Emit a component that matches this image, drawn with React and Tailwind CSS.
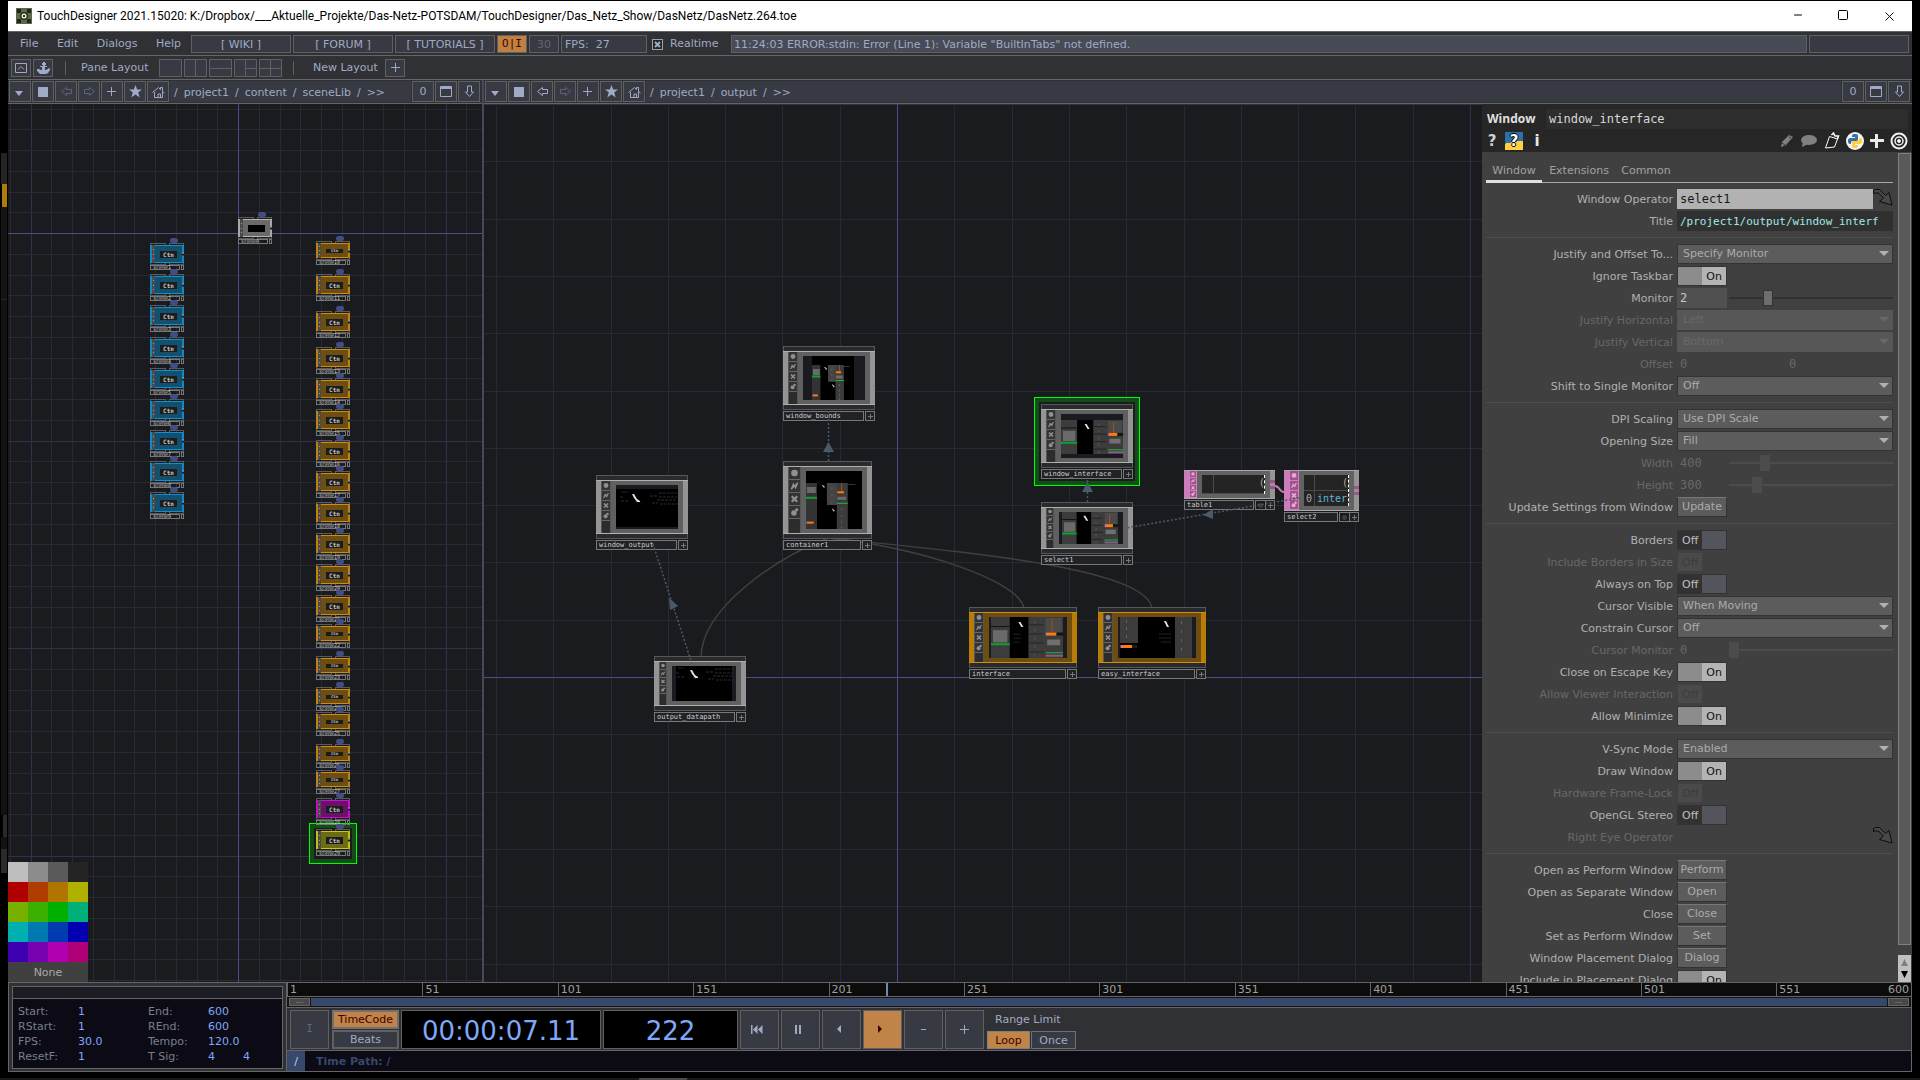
import React, { useState } from 'react';
import { Minus, Square, X } from 'lucide-react';

const swatches = [
  'bg-[#bebebe]', 'bg-[#8c8c8c]', 'bg-[#5a5a5a]', 'bg-[#242424]',
  'bg-[#b00000]', 'bg-[#b03c00]', 'bg-[#b07400]', 'bg-[#b0b000]',
  'bg-[#78b000]', 'bg-[#3cb000]', 'bg-[#00b000]', 'bg-[#00b078]',
  'bg-[#00b0b0]', 'bg-[#0078b0]', 'bg-[#003cb0]', 'bg-[#0000b0]',
  'bg-[#3c00b0]', 'bg-[#7800b0]', 'bg-[#b000b0]', 'bg-[#b00078]',
];

const sceneColors = {
  gray: { edge: 'bg-[#a8a8a8]', fill: 'bg-[#6a6a6a] border-[#b5b5b5]' },
  blue: { edge: 'bg-[#1188c8]', fill: 'bg-[#12506e] border-[#1090d0]' },
  orange: { edge: 'bg-[#c0820c]', fill: 'bg-[#6e4d10] border-[#d08c10]' },
  magenta: { edge: 'bg-[#c010c0]', fill: 'bg-[#6c106c] border-[#c814c8]' },
  yellow: { edge: 'bg-[#c0c010]', fill: 'bg-[#6c6c10] border-[#c8c814]' },
};

// x, y are canvas coordinates of the node frame
const scenes = [
  { n: 0, x: 230, y: 113, h: 18, c: 'gray' },
  ...[139, 170, 201, 233, 264, 295, 326, 357, 388].map((y, i) => ({ n: i + 1, x: 142, y, h: 18, c: 'blue' })),
  { n: 10, x: 308, y: 137, h: 15, c: 'orange' },
  ...[170, 207, 243, 274, 305, 336, 367, 398, 429, 460, 491].map((y, i) => ({ n: i + 11, x: 308, y, h: 18, c: 'orange' })),
  ...[520, 552, 583, 608, 640, 666].map((y, i) => ({ n: i + 22, x: 308, y, h: 15, c: 'orange' })),
  { n: 28, x: 308, y: 694, h: 18, c: 'magenta' },
  { n: 29, x: 308, y: 725, h: 18, c: 'yellow' },
];

const nodes = [
  { name: 'window_bounds', x: 299, y: 242, w: 92, h: 54, icons: 10, view: 'bounds' },
  { name: 'container1', x: 299, y: 357, w: 89, h: 68, icons: 13, view: 'container' },
  { name: 'window_output', x: 112, y: 371, w: 92, h: 54, icons: 10, view: 'output' },
  { name: 'output_datapath', x: 170, y: 552, w: 92, h: 45, icons: 8, view: 'datapath' },
  { name: 'window_interface', x: 557, y: 300, w: 92, h: 54, icons: 10, view: 'window' },
  { name: 'select1', x: 557, y: 398, w: 92, h: 42, icons: 8, view: 'select' },
  { name: 'interface', x: 485, y: 503, w: 108, h: 51, icons: 10, view: 'interface', orange: true },
  { name: 'easy_interface', x: 614, y: 503, w: 108, h: 51, icons: 10, view: 'easy', orange: true },
];

function Grid({ ox, oy, step }) {
  const lines = [];
  for (let i = -40; i <= 40; i++) {
    const x = Math.round(ox + i * step);
    const y = Math.round(oy + i * step);
    const color = i % 10 === 0 ? '#31314e' : '#292a31';
    if (x >= 0) lines.push(<rect key={'v' + i} x={x} y="0" width="1" height="100%" fill={color} />);
    if (y >= 0) lines.push(<rect key={'h' + i} x="0" y={y} width="100%" height="1" fill={color} />);
  }
  return (
    <svg className="absolute inset-0 h-full w-full" aria-hidden="true">
      {lines}
      <rect x={ox} y="0" width="1" height="100%" fill="#4c4c86" />
      <rect x="0" y={oy} width="100%" height="1" fill="#4c4c86" />
    </svg>
  );
}

function SceneNode({ n, x, y, h, c }) {
  const color = sceneColors[c];
  return (
    <div className="absolute w-[34px]" style={{ left: x, top: y }}>
      <div className="absolute -top-[5px] left-[20px] h-[5px] w-[8px] rounded-full bg-[#414d86]"></div>
      <div className="flex h-[2px] justify-between">
        <div className="w-4 border border-b-0 border-[#5a5a5a]"></div>
        <div className="w-[15px] border border-b-0 border-[#5a5a5a]"></div>
      </div>
      <div className="relative flex" style={{ height: h }}>
        <div className={`w-[2px] ${color.edge}`}></div>
        <div className="flex w-[3px] flex-col items-center justify-evenly bg-[#4b4b4b]">
          <span className="h-px w-px bg-[#999]"></span>
          <span className="h-px w-px bg-[#999]"></span>
          <span className="h-px w-px bg-[#999]"></span>
        </div>
        <div className={`flex flex-1 items-center justify-center border-y ${color.fill}`}>
          <div className={`flex w-[17px] items-center justify-center overflow-hidden font-['DejaVu_Sans_Mono',monospace] font-bold text-[#c8c8c8] ${c === 'gray' ? 'h-[7px] bg-black' : h > 15 ? 'h-[7px] bg-[#1c1c1c] text-[6px] leading-[7px]' : 'h-[4px] bg-[#1c1c1c] text-[4px] leading-[4px]'}`}>
            {c !== 'gray' && 'Ctn'}
          </div>
        </div>
        <div className={`w-[2px] ${color.edge}`}></div>
        <div className="absolute right-0 top-1/2 h-[3px] w-[2px] -translate-y-1/2 border-t border-[#ccc] bg-[#15161a]"></div>
      </div>
      <div className="flex h-[2px] justify-between">
        <div className="w-4 border border-t-0 border-[#5a5a5a]"></div>
        <div className="w-[15px] border border-t-0 border-[#5a5a5a]"></div>
      </div>
      <div className="flex h-[5px] justify-between">
        <div className="flex w-[30px] items-center border border-[#777] pl-[2px] font-['DejaVu_Sans_Mono',monospace] text-[5px] leading-[3px] text-[#d0d0d0]">scene{n}</div>
        <div className="w-[3px] border border-[#777]"></div>
      </div>
    </div>
  );
}

function FlagIcons({ width, pink }) {
  const box = pink ? 'bg-[#a0528c] border-[#d080bc]' : 'bg-[#333] border-[#666]';
  const ink = pink ? '#e6a8d8' : '#909090';
  return (
    <div className={`flex flex-col border-x ${pink ? 'bg-[#a0528c] border-[#d080bc]' : 'bg-[#2c2c2c] border-[#555]'}`} style={{ width }}>
      {[
        <circle key="a" cx="5" cy="5" r="3" fill={ink} />,
        <path key="b" d="M2 8 L4 3 L5 5 L8 2 L6 7 L5 5 Z" fill={ink} stroke={ink} />,
        <path key="c" d="M2.500 2.500 L7.500 7.500 M7.500 2.500 L2.500 7.500" stroke={ink} strokeWidth="2" />,
        <g key="d" fill={ink}><circle cx="4.500" cy="6" r="2.500" /><circle cx="7" cy="3" r="1.500" /></g>,
      ].map((shape, i) => (
        <div key={i} className={`border-b ${box}`} style={{ height: pink ? '25%' : width }}>
          <svg viewBox="0 0 10 10" className="h-full w-full">{shape}</svg>
        </div>
      ))}
    </div>
  );
}

function Streak({ x, y }) {
  return <path d={`M${x} ${y} l2 0 l3 5 l3 2 l0 1 l-3 0 l-3 -4 z`} fill="#e0e0e0" />;
}

function Panels({ x, w, h, full }) {
  return (
    <g>
      <rect x={x} y="0" width={w} height={h} fill="#000" />
      <rect x={x} y="0" width={w * 0.26} height={h} fill="#3c3c3c" />
      <rect x={x} y={h * 0.22} width={w * 0.26} height="1" fill="#151515" />
      <rect x={x + 2} y={h * 0.32} width={w * 0.2} height={h * 0.3} fill="#6a6a6a" />
      <rect x={x} y={h * 0.64} width={w * 0.26} height="2" fill="#12a030" />
      <rect x={x + w * 0.52} y="0" width={w * 0.48} height={h} fill="#3c3c3c" />
      <rect x={x + w * 0.76} y="1" width={w * 0.22} height={h * 0.35} fill="#4a4a4a" />
      <rect x={x + w * 0.84} y="2" width="1" height={h * 0.32} fill="#a0501c" />
      {[0.18, 0.4, 0.62, 0.84].map((t) => <rect key={t} x={x + w * 0.53} y={h * t} width={w * 0.2} height="1" fill="#252525" />)}
      {[0.1, 0.3, 0.5, 0.7, 0.92].map((t) => <rect key={t} x={x + w * 0.6} y={h * t} width="1" height="2" fill="#5a5a5a" />)}
      <rect x={x + w * 0.76} y={h * 0.38} width={w * 0.15} height="3" fill="#ff7810" />
      <rect x={x + w * 0.75} y={h * 0.38} width="1" height="3" fill="#3040ff" />
      <rect x={x + w * 0.91} y={h * 0.38} width={w * 0.09} height="3" fill="#151515" />
      <rect x={x + w * 0.78} y={h * 0.55} width={w * 0.18} height={h * 0.14} fill="#707070" />
      <rect x={x + w * 0.76} y={h * 0.86} width={w * 0.24} height="1" fill="#10c030" />
      <rect x={x + w * 0.76} y={h * 0.92} width={w * 0.24} height="2" fill="#8a5a88" />
      <path d={`M${x + w * 0.38} ${h * 0.12} l2 0 l3 5 l-2 0 z`} fill="#e8e8e8" />
      {full && <path d={`M${x + w * 0.3} ${h * 0.42}h8m-7 4h8m-8 4h6`} stroke="#222" />}
    </g>
  );
}

function Tall({ x, y, w, h }) {
  return (
    <g>
      <rect x={x} y={y} width={w * 0.2} height={h} fill="#333" />
      <rect x={x + 1} y={y + 4} width={w * 0.16} height="6" fill="#6a6a6a" />
      <rect x={x} y={y + h * 0.3} width={w * 0.2} height="2" fill="#12a030" />
      <rect x={x} y={y + h * 0.84} width={w * 0.14} height="2" fill="#ff7810" />
      <rect x={x} y={y + h * 0.84} width="1" height="2" fill="#3040ff" />
      <rect x={x + w * 0.38} y={y} width={w * 0.2} height={h * 0.48} fill="#444" />
      <rect x={x + w * 0.56} y={y} width={w * 0.2} height={h} fill="#3c3c3c" />
      <rect x={x + w * 0.64} y={y} width="1" height={h * 0.2} fill="#a0501c" />
      <rect x={x + w * 0.57} y={y + h * 0.18} width={w * 0.12} height="2" fill="#ff7810" />
      <rect x={x + w * 0.57} y={y + h * 0.3} width={w * 0.16} height="3" fill="#6a6a6a" />
      <rect x={x + w * 0.56} y={y + h * 0.43} width={w * 0.2} height="1" fill="#10c030" />
      {[0.1, 0.25, 0.4].map((t) => <rect key={t} x={x + w * 0.46} y={y + h * t} width="1" height="2" fill="#606060" />)}
      {[0.55, 0.7, 0.82, 0.94].map((t) => <rect key={t} x={x + w * 0.64} y={y + h * t} width="1" height="2" fill="#606060" />)}
      <path d={`M${x + w * 0.29} ${y + 2} l1 0 l2 2 l-1 1 z M${x + w * 0.47} ${y + h * 0.56} l1 0 l2 2 l-1 1 z`} fill="#ccc" />
      <rect x={x + w * 0.76} y={y + 1} width={w * 0.14} height="1" fill="#333" />
    </g>
  );
}

function Readout({ x, y }) {
  return (
    <g stroke="#2a2a2a" strokeDasharray="3 1">
      <path d={`M${x} ${y + 4}h7m2 -3h18m-18 4h18m-20 3h20m-25 3h6m2 1h18`} fill="none" />
      <path d={`M${x - 28} ${y}h6m-8 5h3m-2 4h8m8 1h5`} fill="none" />
    </g>
  );
}

function Preview({ view, w, h }) {
  return (
    <svg width={w} height={h} className="block" aria-hidden="true">
      <rect width={w} height={h} fill="#1a1b20" />
      {view === 'bounds' && <><rect x="9" width="42" height={h} fill="#000" /><Tall x={9} y={9} w={42} h={h - 9} /></>}
      {view === 'container' && <><rect width={w} height={h} fill="#000" /><Tall x={0} y={12} w={w - 1} h={h - 12} /></>}
      {view === 'output' && <><rect y="4" width={w} height={h - 6} fill="#000" /><Readout x={34} y={7} /><Streak x={16} y={9} /></>}
      {view === 'datapath' && <><rect x="4" width={w - 8} height={h} fill="#000" /><Readout x={34} y={2} /><Streak x={18} y={4} /></>}
      {view === 'window' && <svg y="6" height={h - 10}><Panels x={0} w={w} h={h - 10} /></svg>}
      {view === 'select' && <Panels x={3} w={w - 8} h={h} />}
      {view === 'interface' && <Panels x={2} w={w - 6} h={h} full />}
      {view === 'easy' && (
        <>
          <rect x="2" width={w - 6} height={h} fill="#000" />
          <rect x="2" width="18" height="26" fill="#3c3c3c" />
          <rect x="2" y="28" width="12" height="3" fill="#ff7810" />
          <rect x="2" y="28" width="1" height="3" fill="#3040ff" />
          <rect x="14" y="28" width="5" height="3" fill="#1c1c1c" />
          <rect x="57" width="17" height={h} fill="#3c3c3c" />
          {[3, 10, 18].map((y) => <rect key={y} x="8" y={y} width="1" height="3" fill="#606060" />)}
          {[4, 13, 22, 31].map((y) => <rect key={y} x="63" y={y} width="1" height="3" fill="#606060" />)}
          <path d="M46 4 l2 0 l3 6 l-2 0 z" fill="#e8e8e8" />
          <path d="M41 17h12m-12 4h12m-10 4h10" stroke="#222" />
        </>
      )}
    </svg>
  );
}

function PlusBox() {
  return (
    <div className="flex h-[10px] w-[10px] items-center justify-center border border-[#777] bg-[#202226]">
      <svg width="5" height="5"><path d="M0 2h5v1H0zM2 0h1v5H2z" fill="#777" /></svg>
    </div>
  );
}

function CompNode({ name, x, y, w, h, icons, view, orange }) {
  const side = orange ? 'bg-[#b87c08]' : 'bg-[#949494]';
  const fill = orange ? 'bg-[#6e4d10]' : 'bg-[#606060]';
  return (
    <div className="absolute" style={{ left: x, top: y, width: w }}>
      <div className="h-[5px] border border-b-0 border-[#55575a] bg-[#292a2c]"></div>
      <div className={`flex border-y ${orange ? 'border-[#d08c10]' : 'border-[#b0b0b0]'}`} style={{ height: h }}>
        <div className={`w-[5px] ${side}`}></div>
        <FlagIcons width={icons} />
        <div className={`flex flex-1 items-center pl-[5px] ${fill}`}>
          <Preview view={view} w={w - icons - 20} h={h - 10} />
        </div>
        <div className={`w-[5px] ${side}`}></div>
      </div>
      <div className="h-[5px] border border-t-0 border-[#55575a] bg-[#292a2c]"></div>
      <div className="mt-px flex gap-px">
        <div className="h-[10px] flex-1 border border-[#777] bg-[#202226] pl-[2px] font-['DejaVu_Sans_Mono',monospace] text-[7px] leading-[8px] text-[#ccc]">{name}</div>
        <PlusBox />
      </div>
    </div>
  );
}

function TableNode({ name, x, y, w, h, icons, children }) {
  return (
    <div className="absolute" style={{ left: x, top: y, width: w }}>
      <div className="flex border-y border-[#a8a8a8]" style={{ height: h }}>
        <div className="w-[5px] bg-[#cc7cb8]"></div>
        <FlagIcons width={icons} pink />
        <div className="flex flex-1 bg-[#626262] px-[5px] py-1">{children}</div>
        <div className="flex w-[5px] flex-col justify-center gap-[3px] bg-[#949494]">
          <span className="h-[3px] bg-[#a0528c]"></span>
          <span className="h-[3px] bg-[#a0528c]"></span>
        </div>
      </div>
      <div className="mt-px flex">
        <div className="mr-px h-[10px] flex-1 border border-[#777] bg-[#202226] pl-[2px] font-['DejaVu_Sans_Mono',monospace] text-[7px] leading-[8px] text-[#ccc]">{name}</div>
        <div className="flex h-[10px] w-[10px] items-center justify-center border border-r-0 border-[#777]"><span className="h-[5px] w-[5px] rounded-full bg-[#36452f]"></span></div>
        <PlusBox />
      </div>
    </div>
  );
}

function BarButton({ label, children, dim }) {
  return (
    <button aria-label={label} className={`flex h-[21px] w-[22px] shrink-0 items-center justify-center border border-[#606062] bg-[#373a42] ${dim ? 'text-[#5c6374]' : 'text-[#a0aac4]'}`}>
      {children}
    </button>
  );
}

function PaneBar({ path, backDim }) {
  return (
    <div className="flex h-6 items-center gap-px border-b border-[#656565] bg-[#303134] pl-px pr-[2px]">
      <BarButton label="Pane type"><svg width="10" height="10"><path d="M0 4h8l-4 5z" fill="currentColor" /></svg></BarButton>
      <BarButton label="Stop"><svg width="10" height="10"><path d="M0 0h10v10H0z" fill="currentColor" /></svg></BarButton>
      <BarButton label="Back" dim={backDim}><svg width="13" height="12" fill="none" stroke="currentColor"><path d="M1.500 5.500l5-4v2h5v4h-5v2z" /></svg></BarButton>
      <BarButton label="Forward" dim><svg width="13" height="12" fill="none" stroke="currentColor"><path d="M11.500 5.500l-5-4v2h-5v4h5v2z" /></svg></BarButton>
      <BarButton label="Add bookmark"><svg width="11" height="11"><path d="M4 1h1v4h4v1H5v4H4V6H0V5h4z" fill="currentColor" /></svg></BarButton>
      <BarButton label="Bookmarks"><svg width="13" height="13"><path d="M6.500 0l1.700 4.500H13L9.200 7.400l1.500 5L6.500 9.600l-4.200 2.800 1.500-5L0 4.500h4.800z" fill="currentColor" /></svg></BarButton>
      <BarButton label="Home"><svg width="13" height="12" fill="none" stroke="currentColor"><path d="M.5 6.500l6-5 2 2v-2h2v4l2 1.500M2.500 6v5.500h8V6M6 11V8h2.500v3" /></svg></BarButton>
      <div className="flex h-[21px] min-w-0 flex-1 gap-[6px] overflow-hidden bg-[#373a42] pl-[4px] text-[11px] leading-[23px] text-[#a0aac4]">
        {path.map((part, i) => <span key={i}>{part}</span>)}
      </div>
      <BarButton label="Network level"><span className="text-[11px] leading-[13px]">0</span></BarButton>
      <BarButton label="Maximize pane"><svg width="12" height="11" fill="none" stroke="currentColor"><path d="M.5 .5h11v10H.5zM.5 1.500h11M.5 2.500h11" /></svg></BarButton>
      <BarButton label="Scroll down"><svg width="11" height="13" fill="none" stroke="currentColor"><path d="M3.500 1v6h-2l4 4.500 4-4.500h-2V1z" /></svg></BarButton>
    </div>
  );
}

function LayoutIcon({ d }) {
  return (
    <button aria-label="Layout preset" className="h-[18px] w-[23px] bg-[#373a42]">
      <svg width="23" height="18" fill="none" stroke="#606062"><path d={'M.5 .5h22v17H.5z' + d} /></svg>
    </button>
  );
}

function MenuBar() {
  return (
    <div className="flex h-[25px] items-center gap-[2px] border-y border-[#656565] bg-[#303134] pr-[3px] text-[11px] text-[#a0aac4]">
      <nav className="flex w-[181px] justify-between pl-3 pr-2 pt-[2px]">
        <button>File</button>
        <button>Edit</button>
        <button>Dialogs</button>
        <button>Help</button>
      </nav>
      <a href="#wiki" className="h-[18px] w-[100px] border border-[#606062] bg-[#373a42] text-center leading-[17px]">[ WIKI ]</a>
      <a href="#forum" className="h-[18px] w-[100px] border border-[#606062] bg-[#373a42] text-center leading-[17px]">[ FORUM ]</a>
      <a href="#tutorials" className="h-[18px] w-[100px] whitespace-nowrap border border-[#606062] bg-[#373a42] text-center leading-[17px]">[ TUTORIALS ]</a>
      <button className="h-[18px] w-[30px] border border-[#606062] bg-[#c08040] font-['DejaVu_Sans_Mono',monospace] leading-4 text-[#400000]">O|I</button>
      <button className="h-[18px] w-[30px] border border-[#606062] bg-[#373a42] leading-[17px] text-[#606674]">30</button>
      <div className="h-[18px] w-[86px] whitespace-pre border border-[#606062] bg-[#373a42] pl-[3px] leading-[17px]">FPS:  27</div>
      <label className="flex w-[80px] items-center gap-[7px] pl-[3px] pt-px">
        <span className="relative h-[11px] w-[11px]">
          <input type="checkbox" defaultChecked className="peer block h-[11px] w-[11px] appearance-none border border-[#a0a0a0] bg-[#25262a]" />
          <svg className="pointer-events-none absolute inset-0 hidden peer-checked:block" width="11" height="11"><path d="M3 3l5 5M8 3l-5 5" stroke="#a0aac4" strokeWidth="2" /></svg>
        </span>
        Realtime
      </label>
      <div className="h-[18px] min-w-0 flex-1 truncate border border-[#606062] bg-[#474b55] pl-[2px] leading-[17px]">11:24:03 ERROR:stdin: Error (Line 1): Variable "BuiltInTabs" not defined.</div>
      <div className="h-[18px] w-[100px] border border-[#606062] bg-[#373a42]"></div>
    </div>
  );
}

function LayoutBar() {
  return (
    <div className="flex h-6 items-center border-b border-[#656565] bg-[#303134] pl-[3px] text-[11px] leading-[18px] text-[#a0aac4]">
      <button aria-label="Shelf" className="flex h-[18px] w-[20px] items-center justify-center border border-[#606062] bg-[#373a42]">
        <svg width="12" height="10" fill="none" stroke="currentColor"><path d="M.5 .5h11v9H.5zM3 6.500l3-3 3 3" /></svg>
      </button>
      <button aria-label="Palette" className="ml-[2px] flex h-[18px] w-[20px] items-center justify-center border border-[#606062] bg-[#373a42]">
        <svg width="13" height="12" fill="currentColor"><path d="M6 0h2v1h1v2H8v1h2v1H8v3h1l3-2 1 1v1l-2 3-2 1H3L0 9V7h2l2 1h1V5H3V4h3V3H5V1h1z" /></svg>
      </button>
      <span className="ml-3 h-[14px] w-px bg-[#606062]"></span>
      <span className="ml-[15px] w-[78px] pt-px">Pane Layout</span>
      <div className="flex gap-[2px]">
        <LayoutIcon d="" />
        <LayoutIcon d="M11.500 0v18" />
        <LayoutIcon d="M0 9.500h23" />
        <LayoutIcon d="M11.500 0v18M11.500 9.500h11" />
        <LayoutIcon d="M11.500 0v18M0 9.500h23" />
      </div>
      <span className="ml-[11px] h-[14px] w-px bg-[#606062]"></span>
      <span className="ml-[19px] w-[72px] whitespace-nowrap pt-px">New Layout</span>
      <button aria-label="Add layout" className="flex h-[18px] w-[20px] items-center justify-center border border-[#606062] bg-[#373a42]">
        <svg width="11" height="11"><path d="M5 1h1v4h4v1H6v4H5V6H1V5h4z" fill="currentColor" /></svg>
      </button>
    </div>
  );
}

function Row({ label, id, dim, children }) {
  return (
    <div className="flex h-[22px] items-start">
      <label htmlFor={id} className={`w-[191px] shrink-0 pr-1 text-right text-[11px] leading-[22px] ${dim ? 'text-[#686868]' : 'text-[#b0b0b0]'}`}>{label}</label>
      <div className="flex h-5 min-w-0 flex-1 items-center">{children}</div>
    </div>
  );
}

function Divider() {
  return <div className="flex h-[11px] pt-1"><div className="h-px w-full bg-[#4e4e4e]"></div></div>;
}

function Menu({ id, value, dim }) {
  return (
    <div className="relative h-5 w-full">
      <select id={id} disabled={dim} className={`block h-5 w-full appearance-none border pl-[5px] text-[11px] leading-[16px] opacity-100 ${dim ? 'border-[#575757] bg-[#575757] text-[#686868]' : 'border-[#333] bg-[#5c5c5c] text-[#ababab]'}`}>
        <option>{value}</option>
      </select>
      <svg className="pointer-events-none absolute right-1 top-[7px]" width="10" height="5"><path d="M0 0h10l-5 5z" fill={dim ? '#686868' : '#b0b0b0'} /></svg>
    </div>
  );
}

function Toggle({ id, initial, dim }) {
  const [on, setOn] = useState(!!initial);
  if (dim) {
    return (
      <div className="relative h-5 w-[50px] py-px pl-px">
        <input id={id} type="checkbox" disabled className="block h-[18px] w-6 appearance-none bg-[#4a4a4a]" />
        <span className="pointer-events-none absolute left-[5px] top-0 text-[11px] leading-[22px] text-[#3c3c3c]">Off</span>
      </div>
    );
  }
  return (
    <div className="relative h-5 w-[50px]">
      <input
        id={id}
        type="checkbox"
        checked={on}
        onChange={(e) => setOn(e.target.checked)}
        className="block h-5 w-[50px] appearance-none border border-[#333] bg-[linear-gradient(90deg,#323232_50%,#54545c_50%)] checked:bg-[linear-gradient(90deg,#8c8c8c_50%,#b4b4b4_50%)]"
      />
      <span className={`pointer-events-none absolute top-0 text-[11px] leading-[22px] ${on ? 'right-[5px] text-[#101010]' : 'left-[5px] text-[#c0c0c0]'}`}>{on ? 'On' : 'Off'}</span>
    </div>
  );
}

function Num({ id, value, pos, dim }) {
  return (
    <>
      <input id={id} defaultValue={value} disabled={dim} className={`h-5 w-[50px] shrink-0 pl-[3px] font-['DejaVu_Sans_Mono',monospace] text-[12px] ${dim ? 'bg-transparent text-[#686868]' : 'bg-[#505050] text-[#c8c8c8]'}`} />
      <input
        type="range"
        aria-label="Value slider"
        defaultValue={pos}
        disabled={dim}
        className={`ml-[2px] h-4 min-w-0 flex-1 appearance-none [&::-webkit-slider-thumb]:h-4 [&::-webkit-slider-thumb]:w-[10px] [&::-webkit-slider-thumb]:appearance-none ${dim ? 'bg-[linear-gradient(#4c4c4c,#4c4c4c)] [&::-webkit-slider-thumb]:bg-[#4c4c4c]' : 'bg-[linear-gradient(#303030,#303030)] [&::-webkit-slider-thumb]:border [&::-webkit-slider-thumb]:border-[#333] [&::-webkit-slider-thumb]:bg-[#6e6e6e]'} bg-[length:100%_2px] bg-center bg-no-repeat`}
      />
    </>
  );
}

function Pulse({ id, children }) {
  return <button id={id} className="h-5 w-[50px] border border-[#333] border-t-[#777] bg-[#5c5c5c] text-center text-[11px] leading-[18px] text-[#ababab]">{children}</button>;
}

function DragArrow() {
  return (
    <svg width="20" height="20" className="shrink-0" fill="#484848" stroke="#0c0c0c">
      <path d="M.5 4.500v-3l2-1h4l6 6 3.500-3 3 12.500-12.500-3.500 4-3.500-5-5h-3z" />
    </svg>
  );
}

function Parameters() {
  return (
    <aside className="flex w-[430px] shrink-0 flex-col overflow-hidden bg-[#262626]">
      <div className="flex h-[25px] items-end gap-2 pl-[5px] pr-1">
        <h2 className="w-[51px] whitespace-nowrap font-['Open_Sans',sans-serif] text-[12px] font-bold leading-[20px] text-[#e0e0e0]">Window</h2>
        <input aria-label="Operator name" defaultValue="window_interface" className="h-5 min-w-0 flex-1 bg-[#2d2d2d] pl-[3px] font-['DejaVu_Sans_Mono',monospace] text-[12px] text-[#d8d8d8]" />
      </div>
      <div className="flex h-[23px] items-center justify-between pl-[5px] pr-1">
        <div className="flex items-center gap-2">
          <button aria-label="Help" className="w-[10px] text-[15px] font-bold leading-[18px] text-[#d0d0d0]">?</button>
          <button aria-label="Python help" className="h-[18px] w-[18px] bg-[linear-gradient(170deg,#3070a8_55%,#ffd040_55%)] text-[15px] font-bold leading-[18px] text-white [text-shadow:1px_0_#000,-1px_0_#000,0_1px_#000,0_-1px_#000]">?</button>
          <button aria-label="Info" className="w-3 text-[15px] font-bold leading-[18px] text-[#e8e8e8]">i</button>
        </div>
        <div className="flex items-center gap-[5px]">
          <svg width="16" height="16"><path d="M2 14l1-5 7-7 4 2-7 8z" fill="#808080" /><path d="M3 10l3 2M10 4l2 1" stroke="#333" /></svg>
          <svg width="18" height="16"><ellipse cx="9" cy="7" rx="8" ry="5" fill="#808080" /><path d="M3 8l-1 6 6-3z" fill="#808080" /></svg>
          <svg width="18" height="18" fill="#222"><path d="M6.500 4.500l8 2.500-3 8-9 1z" stroke="#fff" /><path d="M8.500 3l2-2 1.500 3h3.500l-1 3" fill="none" stroke="#fff" strokeWidth="1.500" /></svg>
          <svg width="18" height="18"><circle cx="9" cy="9" r="9" fill="#f4f4f4" /><path d="M9 2c3 0 3 1 3 3v2c0 2-1 2-3 2H7c-2 0-2 1-2 3-3 0-3-2-3-3s0-3 3-3h4V5H6c0-2 0-3 3-3z" fill="#3670a0" /><path d="M9 16c-3 0-3-1-3-3v-2c0-2 1-2 3-2h2c2 0 2-1 2-3 3 0 3 2 3 3s0 3-3 3H9v1h3c0 2 0 3-3 3z" fill="#ffd040" /></svg>
          <svg width="16" height="16"><path d="M6 1h3v5h6v3H9v6H6V9H1V6h5z" fill="#e8e8e8" /></svg>
          <svg width="18" height="18" fill="none" stroke="#f0f0f0"><circle cx="9" cy="9" r="7.500" strokeWidth="2" /><circle cx="9" cy="9" r="4" strokeWidth="1.500" /><circle cx="9" cy="9" r="1.500" fill="#f0f0f0" /></svg>
        </div>
      </div>
      <div className="flex min-h-0 flex-1 bg-[#404040]">
        <div className="min-w-0 flex-1 overflow-hidden pl-1 pr-[5px]">
          <div className="flex h-[31px] border-b border-[#a8a8a8] text-[11px] text-[#a0a0a0]" role="tablist">
            <button role="tab" className="-mb-px w-[56px] border-b-[3px] border-[#e0e0e0] pt-[11px]">Window</button>
            <button role="tab" className="ml-[5px] w-[64px] pt-[9px]">Extensions</button>
            <button role="tab" className="ml-[7px] w-[56px] pt-[9px]">Common</button>
          </div>
          <div className="pt-[6px]">
            <Row label="Window Operator" id="winop">
              <input id="winop" defaultValue="select1" className="h-5 min-w-0 flex-1 bg-[#b2b2b2] pl-[3px] font-['DejaVu_Sans_Mono',monospace] text-[12px] text-[#181818]" />
              <DragArrow />
            </Row>
            <Row label="Title" id="title">
              <input id="title" defaultValue="/project1/output/window_interf" className="h-5 w-full bg-[#303030] pl-[3px] font-['DejaVu_Sans_Mono',monospace] text-[11px] text-[#a0e8e8]" />
            </Row>
            <Divider />
            <Row label="Justify and Offset To..." id="justify"><Menu id="justify" value="Specify Monitor" /></Row>
            <Row label="Ignore Taskbar" id="taskbar"><Toggle id="taskbar" initial /></Row>
            <Row label="Monitor" id="monitor"><Num id="monitor" value="2" pos={22} /></Row>
            <Row label="Justify Horizontal" id="jh" dim><Menu id="jh" value="Left" dim /></Row>
            <Row label="Justify Vertical" id="jv" dim><Menu id="jv" value="Bottom" dim /></Row>
            <Row label="Offset" id="offset" dim>
              <input id="offset" defaultValue="0" disabled className="h-5 w-[109px] pl-[3px] font-['DejaVu_Sans_Mono',monospace] text-[12px] text-[#686868]" />
              <input aria-label="Offset Y" defaultValue="0" disabled className="h-5 w-[107px] pl-[3px] font-['DejaVu_Sans_Mono',monospace] text-[12px] text-[#686868]" />
            </Row>
            <Row label="Shift to Single Monitor" id="shift"><Menu id="shift" value="Off" /></Row>
            <Divider />
            <Row label="DPI Scaling" id="dpi"><Menu id="dpi" value="Use DPI Scale" /></Row>
            <Row label="Opening Size" id="size"><Menu id="size" value="Fill" /></Row>
            <Row label="Width" id="width" dim><Num id="width" value="400" pos={20} dim /></Row>
            <Row label="Height" id="height" dim><Num id="height" value="300" pos={15} dim /></Row>
            <Row label="Update Settings from Window" id="update"><Pulse id="update">Update</Pulse></Row>
            <Divider />
            <Row label="Borders" id="borders"><Toggle id="borders" /></Row>
            <Row label="Include Borders in Size" id="incb" dim><Toggle id="incb" dim /></Row>
            <Row label="Always on Top" id="ontop"><Toggle id="ontop" /></Row>
            <Row label="Cursor Visible" id="cursor"><Menu id="cursor" value="When Moving" /></Row>
            <Row label="Constrain Cursor" id="constrain"><Menu id="constrain" value="Off" /></Row>
            <Row label="Cursor Monitor" id="curmon" dim><Num id="curmon" value="0" pos={0} dim /></Row>
            <Row label="Close on Escape Key" id="esc"><Toggle id="esc" initial /></Row>
            <Row label="Allow Viewer Interaction" id="viewer" dim><Toggle id="viewer" dim /></Row>
            <Row label="Allow Minimize" id="minimize"><Toggle id="minimize" initial /></Row>
            <Divider />
            <Row label="V-Sync Mode" id="vsync"><Menu id="vsync" value="Enabled" /></Row>
            <Row label="Draw Window" id="draw"><Toggle id="draw" initial /></Row>
            <Row label="Hardware Frame-Lock" id="hw" dim><Toggle id="hw" dim /></Row>
            <Row label="OpenGL Stereo" id="stereo"><Toggle id="stereo" /></Row>
            <Row label="Right Eye Operator" id="eye" dim>
              <input id="eye" disabled className="h-5 min-w-0 flex-1" />
              <DragArrow />
            </Row>
            <Divider />
            <Row label="Open as Perform Window" id="perform"><Pulse id="perform">Perform</Pulse></Row>
            <Row label="Open as Separate Window" id="open"><Pulse id="open">Open</Pulse></Row>
            <Row label="Close" id="close"><Pulse id="close">Close</Pulse></Row>
            <Row label="Set as Perform Window" id="set"><Pulse id="set">Set</Pulse></Row>
            <Row label="Window Placement Dialog" id="dialog"><Pulse id="dialog">Dialog</Pulse></Row>
            <Row label="Include in Placement Dialog" id="incl"><Toggle id="incl" initial /></Row>
          </div>
        </div>
        <div className="mr-px flex w-[13px] flex-col bg-[#404040]">
          <div className="mt-px flex-1 border border-[#808080] bg-[#5a5a5a]"></div>
          <div className="mt-[10px] flex h-[27px] flex-col items-center justify-evenly bg-[#c0c0c0]">
            <svg width="7" height="7"><path d="M3.500 0L7 7H0z" fill="#808080" /></svg>
            <svg width="7" height="7"><path d="M3.500 7L7 0H0z" fill="#000" /></svg>
          </div>
        </div>
      </div>
    </aside>
  );
}

function LeftNetwork() {
  return (
    <section className="flex w-[474px] shrink-0 flex-col">
      <PaneBar path={['/', 'project1', '/', 'content', '/', 'sceneLib', '/', '>>']} backDim />
      <div className="relative flex-1 overflow-hidden bg-[#1a1b1e]">
        <Grid ox={230} oy={129} step={20.75} />
        <div className="absolute left-[301px] top-[719px] h-[41px] w-[48px] border border-[#00ff00] bg-[#1a1b1e]">
          <div className="h-full w-full border-4 border-[#144c18]"></div>
        </div>
        {scenes.map((s) => <SceneNode key={s.n} {...s} />)}
        <div className="absolute bottom-0 left-0 w-20">
          <div className="grid grid-cols-4">
            {swatches.map((c, i) => <button key={c} aria-label={`Node color ${i + 1}`} className={`h-5 w-5 ${c}`}></button>)}
          </div>
          <button className="block h-5 w-full bg-[#404040] text-[11px] leading-[22px] text-[#a8a8a8]">None</button>
        </div>
      </div>
    </section>
  );
}

function MainNetwork() {
  return (
    <section className="flex min-w-0 flex-1 flex-col border-l-2 border-[#48485c]">
      <PaneBar path={['/', 'project1', '/', 'output', '/', '>>']} />
      <div className="flex min-h-0 flex-1">
        <div className="relative min-w-0 flex-1 overflow-hidden bg-[#1a1b1e]">
          <Grid ox={413} oy={573} step={57.3} />
          <div className="absolute left-[550px] top-[293px] h-[89px] w-[106px] border border-[#00ff00] bg-[#1a1b1e]">
            <div className="h-full w-full border-4 border-[#144c18]"></div>
          </div>
          <svg className="absolute inset-0 h-full w-full" fill="none" stroke="#404040" strokeWidth="1.500" aria-hidden="true">
            <path d="M344 434C290 455 217 505 217 554" />
            <path d="M344 434C430 442 540 477 540 506" />
            <path d="M344 434C480 448 668 464 668 506" />
            <path d="M791 382c5 0 4 6 9 6" stroke="#cc7cb8" strokeWidth="2" />
          </svg>
          {nodes.map((n) => <CompNode key={n.name} {...n} />)}
          <TableNode name="table1" x={700} y={366} w={91} h={29} icons={8}>
            <div className="flex flex-1 justify-between border-r border-dashed border-white bg-[#242424]">
              <div className="w-3 border-b border-r border-[#4a4a4a]"></div>
              <div className="flex-1 border-b border-[#4a4a4a] text-right text-[10px] leading-4 text-[#aaa]">(</div>
            </div>
          </TableNode>
          <TableNode name="select2" x={800} y={366} w={75} h={41} icons={10}>
            <div className="grid flex-1 grid-cols-[11px_1fr] grid-rows-2 border-r border-dashed border-white bg-[#242424] font-['DejaVu_Sans_Mono',monospace] text-[10px] leading-4">
              <span className="border-b border-r border-[#4a4a4a]"></span>
              <span className="border-b border-[#4a4a4a] text-right text-[#aaa]">(</span>
              <span className="border-r border-[#4a4a4a] text-center text-[#aaa]">0</span>
              <span className="pl-[2px] text-[#60b4d0]">inter</span>
            </div>
          </TableNode>
          <svg className="absolute inset-0 h-full w-full" fill="none" stroke="#4a5a6a" strokeWidth="1.500" strokeDasharray="2 2" aria-hidden="true">
            <path d="M344.500 357V306M169 440L208 560M603.500 398V375M815 394L642 424" />
            <path d="M339 348h11l-5.500-10zM185 494l9 8-8 4zM598 388h11l-5.500-10zM719 411l10-6v10z" fill="#4a5a6a" stroke="none" />
          </svg>
        </div>
        <Parameters />
      </div>
    </section>
  );
}

function TimeInfo() {
  const rows = [
    ['Start:', '1', 'End:', '600'],
    ['RStart:', '1', 'REnd:', '600'],
    ['FPS:', '30.0', 'Tempo:', '120.0'],
    ['ResetF:', '1', 'T Sig:', '4'],
  ];
  return (
    <div className="w-[279px] shrink-0 border border-[#656565] bg-[#303134] p-[3px]">
      <div className="h-[83px] border border-[#656565] bg-[#0c0a14]">
        <div className="h-3 border-b border-[#656565] bg-[#1c1c24]"></div>
        <table className="mt-[5px] table-fixed text-left text-[11px] leading-[15px]">
          <tbody>
            {rows.map((r) => (
              <tr key={r[0]}>
                <th className="w-[65px] pl-[5px] font-normal text-[#75808f]">{r[0]}</th>
                <td className="w-[70px] text-[#80a8f8]">{r[1]}</td>
                <th className="w-[60px] font-normal text-[#75808f]">{r[2]}</th>
                <td className="w-[35px] text-[#80a8f8]">{r[3]}</td>
                <td className="text-[#80a8f8]">{r[0] === 'ResetF:' && '4'}</td>
              </tr>
            ))}
          </tbody>
        </table>
      </div>
    </div>
  );
}

function TransportButton({ label, active, media, children }) {
  return (
    <button aria-label={label} className={`flex h-[39px] w-[39px] items-center justify-center border border-[#606062] ${media ? 'pr-[6px]' : ''} ${active ? 'bg-[#c08448] text-[#400000]' : 'bg-[#373a42] text-[#a0aac4]'}`}>
      {children}
    </button>
  );
}

function Timeline() {
  return (
    <div className="flex min-w-0 flex-1 flex-col border-r border-t border-[#656565]">
      <div className="relative flex h-[14px] border-b border-[#656565] bg-[#0c0c0c] text-[11px] leading-[13px] text-[#a0a0a0]">
        {[1, 51, 101, 151, 201, 251, 301, 351, 401, 451, 501].map((f) => (
          <div key={f} className="flex-[50] basis-0 border-l border-[#656565] pl-[2px]">{f}</div>
        ))}
        <div className="flex flex-[49] basis-0 justify-between border-l border-[#656565] pl-[2px] pr-[2px]"><span>551</span><span>600</span></div>
        <div className="absolute inset-y-0 w-[2px] bg-[#7088b8]" style={{ left: `${(221 / 599) * 100}%` }}></div>
      </div>
      <div className="flex h-[11px] gap-px border-b border-[#656565] bg-[#141416] px-[2px] py-px">
        <div className="w-[21px] border border-[#666] bg-[#484848] text-center text-[8px] leading-[3px] text-[#999]">...</div>
        <div className="flex-1 bg-[#36486c]"></div>
        <div className="w-[21px] border border-[#666] bg-[#484848] text-center text-[8px] leading-[3px] text-[#999]">...</div>
      </div>
      <div className="flex flex-1 items-center gap-[2px] border-b border-[#656565] bg-[#303134] pl-[3px] text-[11px]">
        <button className="h-[39px] w-[39px] border border-[#606062] bg-[#373a42] font-['DejaVu_Sans_Mono',monospace] text-[#606674]">I</button>
        <div className="flex w-[68px] flex-col gap-px pl-px">
          <button className="h-[19px] border-2 border-[#707072] bg-[#c08448] leading-4 text-[#400000]">TimeCode</button>
          <button className="h-[19px] border-2 border-[#606062] bg-[#373a42] leading-4 text-[#a0aac4]">Beats</button>
        </div>
        <div className="h-[39px] w-[200px] border border-[#606062] bg-black text-center text-[26px] leading-[41px] text-[#80a8f8]">00:00:07.11</div>
        <div className="h-[39px] w-[135px] border border-[#606062] bg-black text-center text-[26px] leading-[41px] text-[#80a8f8]">222</div>
        <TransportButton label="Jump to start" media><svg width="12" height="9" fill="currentColor"><path d="M0 0h1.500v9H0zM6.500 0v9L2 4.500zM11.500 0v9L7 4.500z" /></svg></TransportButton>
        <TransportButton label="Pause" media><svg width="6" height="9" fill="currentColor"><path d="M0 0h2v9H0zM4 0h2v9H4z" /></svg></TransportButton>
        <TransportButton label="Play reverse" media><svg width="4" height="8" fill="currentColor"><path d="M4 0v8L0 4z" /></svg></TransportButton>
        <TransportButton label="Play" active media><svg width="4" height="8" fill="currentColor"><path d="M0 0v8l4-4z" /></svg></TransportButton>
        <TransportButton label="Step back"><svg width="5" height="1"><path d="M0 0h5v1H0z" fill="currentColor" /></svg></TransportButton>
        <TransportButton label="Step forward"><svg width="9" height="9"><path d="M4 0h1v4h4v1H5v4H4V5H0V4h4z" fill="currentColor" /></svg></TransportButton>
        <div className="h-[39px] pl-px">
          <div className="h-[21px] pl-2 leading-[19px] text-[#a0aac4]">Range Limit</div>
          <div className="flex gap-px">
            <button className="h-[18px] w-[43px] border border-[#808080] bg-[#c08448] leading-[17px] text-[#400000]">Loop</button>
            <button className="h-[18px] w-[45px] border border-[#707072] bg-[#373a42] leading-[17px] text-[#a0aac4]">Once</button>
          </div>
        </div>
      </div>
      <div className="flex h-[21px] border-b border-[#656565] bg-[#0c0a14]">
        <button className="w-[18px] bg-[#36486c] text-[11px] leading-[22px] text-[#c0d0f0]">/</button>
        <span className="pl-[11px] text-[11px] font-bold leading-[22px] text-[#36486c]">Time Path: /</span>
      </div>
    </div>
  );
}

export default function App() {
  return (
    <div className="flex h-screen flex-col overflow-hidden bg-black font-['DejaVu_Sans',Verdana,sans-serif]">
      <div className="flex min-h-0 flex-1">
        <div className="flex w-2 shrink-0 flex-col pl-px pr-px pt-[153px]">
          <div className="h-[31px] bg-[#242424]"></div>
          <div className="ml-px h-[23px] bg-[#b07c08]"></div>
          <div className="h-[93px] border-b border-[#2a2a2a] bg-[#141414]"></div>
          <div className="h-[515px] bg-[#121212]"></div>
          <div className="ml-[2px] h-[22px] bg-[#2a2a2a]"></div>
          <div className="h-3 bg-[#121212]"></div>
          <div className="h-6 bg-[#2a2a2a]"></div>
        </div>
        <div className="flex min-w-0 flex-1 flex-col pt-px">
          <header className="flex h-[30px] items-center bg-white pl-2">
            <svg width="16" height="16" className="shrink-0">
              <path d="M0 0h16v16H0z" fill="#5c6848" />
              <path d="M1 1h4v4H1zM11 1h4v4h-4zM1 11h4v4H1zM11 11h4v4h-4z" fill="#22261a" />
              <circle cx="8" cy="8" r="4" fill="#2c3022" />
              <circle cx="8" cy="8" r="2.500" fill="#f4f4e8" />
              <path d="M7 7h2v2H7z" fill="#222" />
            </svg>
            <h1 className="ml-[5px] flex-1 font-['Roboto',sans-serif] text-[12px] text-black">TouchDesigner 2021.15020: K:/Dropbox/___Aktuelle_Projekte/Das-Netz-POTSDAM/TouchDesigner/Das_Netz_Show/DasNetz/DasNetz.264.toe</h1>
            <div className="flex text-black">
              <button aria-label="Minimize" className="flex w-[45px] justify-center"><Minus size={12} strokeWidth={2} /></button>
              <button aria-label="Maximize" className="flex w-[46px] justify-center"><Square size={12} strokeWidth={2} /></button>
              <button aria-label="Close window" className="flex w-[46px] justify-center"><X size={15} strokeWidth={1.5} /></button>
            </div>
          </header>
          <MenuBar />
          <LayoutBar />
          <main className="flex min-h-0 flex-1">
            <LeftNetwork />
            <MainNetwork />
          </main>
          <footer className="flex h-[90px] shrink-0">
            <TimeInfo />
            <Timeline />
          </footer>
        </div>
        <div className="w-2 shrink-0"></div>
      </div>
      <div className="flex h-2 items-end bg-black">
        <div className="flex h-[2px] w-full justify-start bg-[#181818] pl-[639px]"><span className="w-12 bg-[#4a4a4a]"></span></div>
      </div>
    </div>
  );
}
